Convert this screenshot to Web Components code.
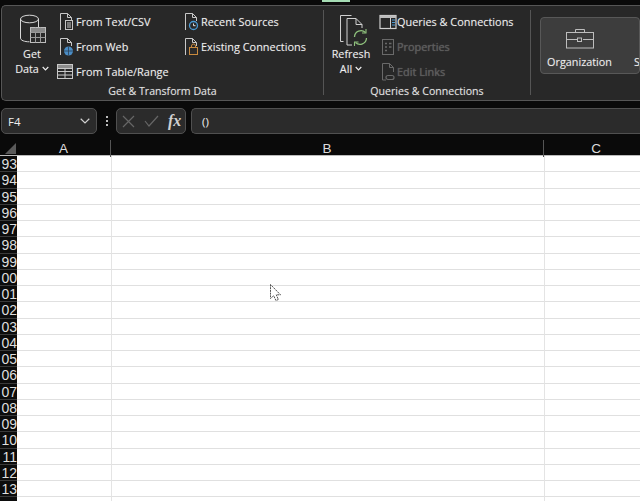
<!DOCTYPE html>
<html lang="en">
<head>
<meta charset="utf-8">
<title>Data ribbon</title>
<style>
  html, body { margin: 0; height: 100%; background: #0a0a0a; overflow: hidden; }
  body { font-family: "Open Sans", "Noto Sans", sans-serif; }
</style>
</head>
<body>
<excel-app></excel-app>

<script>
// Icons for the ribbon, all drawn on a 18x20 box unless the viewBox says otherwise.
const S = '#c8c8c8';
const page = `<path d="M2.500 18V1.500h7l4 4V9M9.500 1.500v4h4" fill="none" stroke="${S}"/>`;
const ICONS = {
  database: `<svg width="30" height="31" viewBox="-2 0 30 31" fill="none" stroke="#d8d8d8">
      <ellipse cx="10.500" cy="5" rx="9" ry="3.800"/>
      <path d="M1.500 5v19c0 2.400 4 3.800 9 3.800M19.500 5v8"/>
      <rect x="11.500" y="13.500" width="15" height="15" fill="#2a2a2a" stroke="#bdbdbd"/>
      <path d="M11.500 18.500h15M11.500 23.500h15M16.500 13.500v15M21.500 13.500v15" stroke="#9a9a9a"/>
      <rect x="12" y="14" width="14" height="4" fill="#8a8a8a" stroke="none"/>
    </svg>`,
  text: `<svg width="18" height="20" viewBox="0 0 18 20">${page}
      <rect x="7.500" y="8.500" width="7" height="9" fill="#2a2a2a" stroke="${S}"/>
      <path d="M9 11h4M9 13h4M9 15h4" stroke="${S}"/></svg>`,
  web: `<svg width="18" height="20" viewBox="0 0 18 20">${page}
      <circle cx="10.500" cy="14" r="4.500" fill="#4a8cc4"/>
      <path d="M6 14h9M10.500 9.500v9" stroke="#2a3f55" stroke-width=".8"/></svg>`,
  table: `<svg width="18" height="18" viewBox="1 1 18 18" fill="none" style="margin-left:-2px">
      <rect x="1.500" y="2.500" width="15" height="14" stroke="${S}"/>
      <rect x="2" y="3" width="14" height="3.500" fill="#8c8c8c"/>
      <path d="M1.500 6.500h15M1.500 9.500h15M1.500 13h15M9 6.500v10" stroke="${S}"/></svg>`,
  recent: `<svg width="18" height="20" viewBox="0 0 18 20">${page}
      <circle cx="10.500" cy="13.500" r="4" fill="#2a2a2a" stroke="#4a9ad4" stroke-width="1.300"/>
      <path d="M10.500 11.500v2.200h2" fill="none" stroke="#e0e0e0"/></svg>`,
  existing: `<svg width="18" height="20" viewBox="0 0 18 20">${page}
      <path d="M8.500 10.500V9a2 2 0 0 1 4 0v1.500" fill="none" stroke="#c98a3e"/>
      <rect x="6.500" y="10.500" width="8" height="7" fill="#2a2a2a" stroke="#c98a3e"/></svg>`,
  refresh: `<svg width="36" height="32" viewBox="-6 0 36 32" fill="none" stroke="#d0d0d0">
      <path d="M4.500 27.500H1.500v-26h11"/>
      <path d="M8 31V4.500h9l6 6V14M17 4.500v6h6M8 31h5"/>
      <path d="M15.500 23a6.500 6.500 0 0 1 11-4.500M27.500 24a6.500 6.500 0 0 1-11 4.500" stroke="#8ec07c" stroke-width="1.300"/>
      <path d="M27 15v4h-4M15.500 32v-4h4" stroke="#8ec07c" stroke-width="1.100"/>
    </svg>`,
  queries: `<svg width="18" height="16" viewBox="0 0 18 16" fill="none">
      <rect x="1" y="1.500" width="16" height="13" stroke="#cfcfcf" stroke-width="1.200"/>
      <rect x="1" y="1.500" width="16" height="2.500" fill="#bdbdbd"/>
      <path d="M11.500 4v10.500" stroke="#cfcfcf"/>
      <path d="M13 6h3M13 8.500h3M13 11h3" stroke="#4a9ad4"/></svg>`,
  properties: `<svg width="14" height="18" viewBox="0 0 14 18" fill="none" stroke="#6a6a6a">
      <rect x="1.500" y="1.500" width="11" height="15"/>
      <path d="M4 5.500h2M8 5.500h2.500M4 9h2M8 9h2.500M4 12.500h2" stroke-width="1.400"/></svg>`,
  links: `<svg width="18" height="20" viewBox="0 0 18 20" fill="none" stroke="#6a6a6a">
      <path d="M3.500 18V1.500h7l4 4V10M10.500 1.500v4h4M3.500 18H7"/>
      <path d="M9 13.500h4a2 2 0 0 1 0 4h-1M13 17.500H9a2 2 0 0 1 0-4h1" stroke-width="1.200"/></svg>`,
  briefcase: `<svg width="28" height="21" viewBox="0 0 28 21" fill="none" stroke="#bdbdbd">
      <path d="M9.500 4.500v-3h9v3"/>
      <rect x=".5" y="4.500" width="27" height="15.500"/>
      <path d="M.5 11.500h10.500M17 11.500h10.500"/>
      <rect x="11.500" y="10" width="4" height="3.500"/></svg>`
};

const chevron = `<svg width="7" height="5" viewBox="0 0 7 5"><path d="M.7 1l2.800 2.800L6.300 1" fill="none" stroke="currentColor" stroke-width="1.200"/></svg>`;

// Large ribbon button: icon on top, one or two lines of label under it
class RibbonLarge extends HTMLElement {
  connectedCallback() {
    const lines = (this.getAttribute('label') || '').split('|');
    const last = lines.pop();
    this.attachShadow({ mode: 'open' }).innerHTML = `
      <style>
        :host { display: flex; flex-direction: column; align-items: center; color: #eee; font-size: 10.800px; line-height: 15px; }
        .icon { display: flex; height: 31px; margin-bottom: 1px; }
        .drop { display: flex; align-items: center; gap: 3px; }
      </style>
      <div class="icon">${ICONS[this.getAttribute('icon')]}</div>
      ${lines.map(l => `<div>${l}</div>`).join('')}
      <div class="drop">${last} ${chevron}</div>`;
  }
}

// Small ribbon button: icon then text on one row
class RibbonSmall extends HTMLElement {
  connectedCallback() {
    this.attachShadow({ mode: 'open' }).innerHTML = `
      <style>
        :host { display: flex; align-items: center; height: 25px; color: #eee; font-size: 10.900px; white-space: nowrap; }
        :host([disabled]) { color: #5c5c5c; }
        .icon { width: 19px; display: flex; justify-content: center; flex: none; }
      </style>
      <span class="icon">${ICONS[this.getAttribute('icon')]}</span><slot></slot>`;
  }
}

// Titled group of the ribbon
class RibbonGroup extends HTMLElement {
  connectedCallback() {
    this.attachShadow({ mode: 'open' }).innerHTML = `
      <style>
        :host { display: flex; flex-direction: column; height: 94px; flex: none; position: relative; }
        .body { display: flex; height: 75px; padding-top: 3px; }
        .title { text-align: center; color: #e2e2e2; font-size: 10.600px; line-height: 15px; white-space: nowrap; }
      </style>
      <div class="body"><slot></slot></div>
      <div class="title">${this.getAttribute('title') || ''}</div>`;
    this.removeAttribute('title');
  }
}

class RibbonBar extends HTMLElement {
  connectedCallback() {
    this.attachShadow({ mode: 'open' }).innerHTML = `
      <style>
        :host { display: block; height: 101px; padding-top: 5px; box-sizing: border-box; position: relative; text-shadow: 0 0 1px rgba(255,255,255,.3); }
        .tab { position: absolute; top: 0; left: 322px; width: 28px; height: 2px; background: #a5dcb4; }
        .panel { display: flex; height: 96px; margin-left: 1px; background: #282828; border: 1px solid #565656; border-right: 0; border-radius: 5px 0 0 5px; box-sizing: border-box; overflow: hidden; }
      </style>
      <div class="tab"></div>
      <div class="panel">
        <slot></slot>
      </div>`;
  }
}

class RibbonSep extends HTMLElement {
  connectedCallback() {
    this.attachShadow({ mode: 'open' }).innerHTML = `
      <style>:host { display: block; flex: none; width: 1px; height: 85px; margin-top: 4px; background: #555; }</style>`;
  }
}

class RibbonColumn extends HTMLElement {
  connectedCallback() {
    this.attachShadow({ mode: 'open' }).innerHTML = `
      <style>:host { display: flex; flex-direction: column; flex: none; }</style><slot></slot>`;
  }
}

// The selected tile in the organization group, the next tile runs off the window
class RibbonTile extends HTMLElement {
  connectedCallback() {
    this.attachShadow({ mode: 'open' }).innerHTML = `
      <style>
        :host { display: flex; margin: 11px 0 0 9px; width: 140px; height: 57px; box-sizing: border-box; background: #3d3d3d; border: 1px solid #585858; border-radius: 4px; color: #eee; font-size: 10.800px; overflow: hidden; }
        .item { flex: none; width: 77px; display: flex; flex-direction: column; align-items: center; padding-top: 10px; white-space: nowrap; }
        .icon { display: flex; height: 21px; margin-bottom: 5px; }
        .next { width: 22px; align-items: flex-end; }
      </style>
      <div class="item"><span class="icon">${ICONS.briefcase}</span><span>Organization</span></div>
      <div class="item next"><span class="icon"></span><span>S</span></div>`;
  }
}

class FormulaBar extends HTMLElement {
  connectedCallback() {
    this.attachShadow({ mode: 'open' }).innerHTML = `
      <style>
        :host { display: flex; align-items: stretch; height: 26px; margin: 7px 0 6px 1px; color: #eee; font-size: 11.500px; }
        .box { box-sizing: border-box; border: 1px solid #505050; background: #2b2b2b; border-radius: 5px; display: flex; align-items: center; }
        .name { width: 96px; padding: 0 6px; justify-content: space-between; }
        .name svg { width: 10px; height: 6px; }
        .dots { width: 19px; display: flex; flex-direction: column; align-items: center; justify-content: center; gap: 2px; }
        .dots i { width: 2px; height: 2px; background: #bdbdbd; }
        .fn { width: 70px; padding-left: 5px; gap: 9px; }
        .fx { font-family: "Liberation Serif", serif; font-style: italic; font-weight: bold; font-size: 16px; color: #d0d0d0; }
        .input { flex: 1; margin-left: 5px; padding-left: 10px; border-right: 0; border-radius: 5px 0 0 5px; }
      </style>
      <div class="box name"><span>F4</span><svg viewBox="0 0 10 6"><path d="M.7 .8L5 5l4.300-4.200" fill="none" stroke="#d0d0d0" stroke-width="1.200"/></svg></div>
      <div class="dots"><i></i><i></i><i></i></div>
      <div class="box fn">
        <svg width="13" height="13" viewBox="0 0 13 13"><path d="M1 1l11 11M12 1L1 12" stroke="#666" stroke-width="1.200"/></svg>
        <svg width="15" height="12" viewBox="0 0 15 12"><path d="M1 6l4 5L14 1" fill="none" stroke="#666" stroke-width="1.200"/></svg>
        <span class="fx">fx</span>
      </div>
      <div class="box input"><slot></slot></div>`;
  }
}

class SheetRow extends HTMLElement {
  connectedCallback() {
    this.attachShadow({ mode: 'open' }).innerHTML = `
      <style>
        :host { display: grid; grid-template-columns: 17px 95px 433px 95px; height: 16.250px; box-sizing: border-box; background: #fff; }
        div { box-sizing: border-box; border-bottom: 1px solid #e0e0e0; }
        .num { background: #0c0c0c; color: #dedede; border-bottom: 1px solid #3a3a3a; font: 14px/17px "Liberation Sans", sans-serif; display: flex; justify-content: flex-end; overflow: hidden; }
        .cell { border-right: 1px solid #e4e4e4; }
      </style>
      <div class="num"><slot></slot></div>
      <div class="cell"></div><div class="cell"></div><div></div>`;
  }
}

class SheetGrid extends HTMLElement {
  connectedCallback() {
    const first = Number(this.getAttribute('first'));
    const count = Number(this.getAttribute('count'));
    this.attachShadow({ mode: 'open' }).innerHTML = `
      <style>
        :host { display: block; flex: 1; min-height: 0; overflow: hidden; position: relative; }
        .head { display: grid; grid-template-columns: 17px 94px 433px 104px; height: 16px; box-sizing: border-box; border-bottom: 1px solid #bcbcbc; color: #dcdcdc; font: 13.500px/17px "Liberation Sans", sans-serif; background: #0a0a0a; }
        .head div { text-align: center; border-right: 1px solid #555; }
        .head div:last-child { border: 0; }
        .corner { position: relative; border-right: 0 !important; }
        .corner svg { position: absolute; left: 5px; top: 3px; }
        .cursor { position: absolute; left: 269px; top: 143px; }
      </style>
      <div class="head">
        <div class="corner"><svg width="11" height="11" viewBox="0 0 11 11"><path d="M11 0v11H0z" fill="#5a5a5a"/></svg></div>
        <div>A</div><div>B</div><div>C</div>
      </div>
      <slot></slot>
      <svg class="cursor" width="14" height="20" viewBox="0 0 14 20"><path d="M1.500 1.500v14l3.200-2.800 2.200 4.800 2.500-1-2.200-4.700h4.300z" fill="#fff" stroke="#555" stroke-dasharray="2 .7"/></svg>`;
    // the header column only has room for the last two digits of the row number
    for (let i = 0; i < count; i++) {
      const row = document.createElement('sheet-row');
      row.textContent = String(first + i).slice(-2);
      this.appendChild(row);
    }
    this.appendChild(document.createElement('sheet-row'));
  }
}

class ExcelApp extends HTMLElement {
  connectedCallback() {
    this.attachShadow({ mode: 'open' }).innerHTML = `
      <style>
        :host { display: flex; flex-direction: column; height: 501px; overflow: hidden; background: #0a0a0a; }
      </style>
      <ribbon-bar>
        <ribbon-group title="Get &amp; Transform Data" style="width:321px">
          <ribbon-large icon="database" label="Get|Data" style="width:60px;padding-top:5px"></ribbon-large>
          <ribbon-column style="width:125px;margin-left:-5px">
            <ribbon-small icon="text">From Text/CSV</ribbon-small>
            <ribbon-small icon="web">From Web</ribbon-small>
            <ribbon-small icon="table">From Table/Range</ribbon-small>
          </ribbon-column>
          <ribbon-column>
            <ribbon-small icon="recent">Recent Sources</ribbon-small>
            <ribbon-small icon="existing">Existing Connections</ribbon-small>
          </ribbon-column>
        </ribbon-group>
        <ribbon-sep></ribbon-sep>
        <ribbon-group title="Queries &amp; Connections" style="width:206px">
          <ribbon-large icon="refresh" label="Refresh|All" style="width:54px;padding-top:5px"></ribbon-large>
          <ribbon-column>
            <ribbon-small icon="queries">Queries &amp; Connections</ribbon-small>
            <ribbon-small icon="properties" disabled>Properties</ribbon-small>
            <ribbon-small icon="links" disabled>Edit Links</ribbon-small>
          </ribbon-column>
        </ribbon-group>
        <ribbon-sep></ribbon-sep>
        <ribbon-tile></ribbon-tile>
      </ribbon-bar>
      <formula-bar>()</formula-bar>
      <sheet-grid first="93" count="21"></sheet-grid>`;
  }
}

customElements.define('ribbon-large', RibbonLarge);
customElements.define('ribbon-small', RibbonSmall);
customElements.define('ribbon-group', RibbonGroup);
customElements.define('ribbon-column', RibbonColumn);
customElements.define('ribbon-sep', RibbonSep);
customElements.define('ribbon-tile', RibbonTile);
customElements.define('ribbon-bar', RibbonBar);
customElements.define('formula-bar', FormulaBar);
customElements.define('sheet-row', SheetRow);
customElements.define('sheet-grid', SheetGrid);
customElements.define('excel-app', ExcelApp);
</script>
</body>
</html>
